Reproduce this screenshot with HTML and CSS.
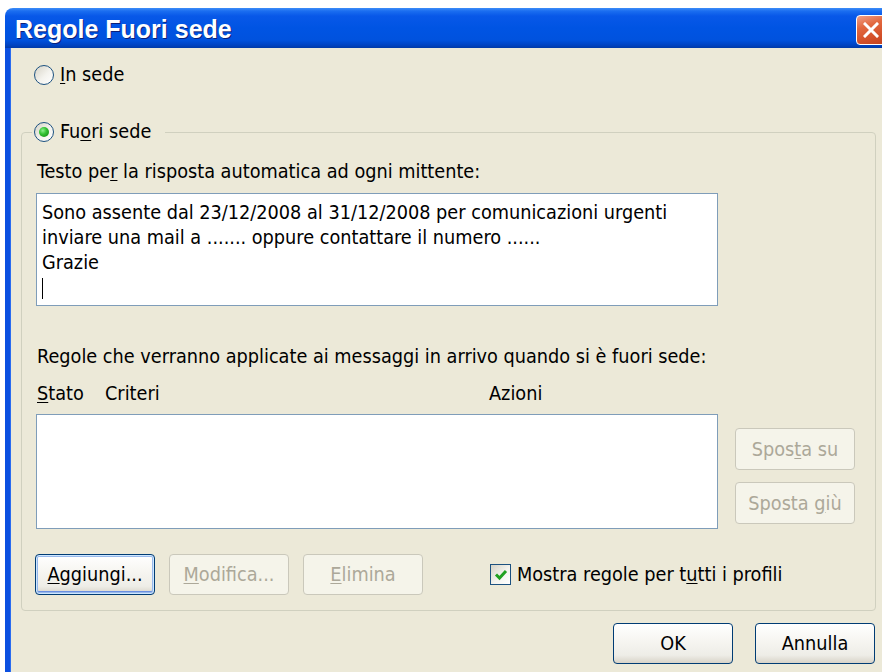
FILE: index.html
```html
<!DOCTYPE html>
<html lang="it">
<head>
<meta charset="utf-8">
<title>Regole Fuori sede</title>
<link rel="stylesheet" href="styles.css">
</head>
<body>
<div class="window">
  <div class="titlebar">
    <span class="title">Regole Fuori sede</span>
    <span class="close">
      <svg width="16" height="16" viewBox="0 0 16 16"><path d="M2 2 L14 14 M14 2 L2 14" stroke="#fff" stroke-width="3" stroke-linecap="square" fill="none"/></svg>
    </span>
  </div>
  <div class="client">
    <div class="option"><span class="radio"></span><span><u>I</u>n sede</span></div>
    <fieldset class="group">
      <legend class="option legend"><span class="radio checked"></span><span>Fu<u>o</u>ri sede</span></legend>
      <div class="group-body">
        <div class="label">Testo pe<u>r</u> la risposta automatica ad ogni mittente:</div>
        <div class="textbox">Sono assente dal 23/12/2008 al 31/12/2008 per comunicazioni urgenti<br>inviare una mail a ....... oppure contattare il numero ......<br>Grazie<br><span class="caret"></span></div>
        <div class="label rules-label">Regole che verranno applicate ai messaggi in arrivo quando si è fuori sede:</div>
        <div class="columns"><span><u>S</u>tato</span><span>Criteri</span><span>Azioni</span></div>
        <div class="list-row">
          <div class="listbox"></div>
          <div class="side-buttons">
            <button class="btn" disabled>Spos<u>t</u>a su</button>
            <button class="btn" disabled>Sposta <u>g</u>iù</button>
          </div>
        </div>
        <div class="actions">
          <button class="btn default"><u>A</u>ggiungi...</button>
          <button class="btn" disabled><u>M</u>odifica...</button>
          <button class="btn" disabled><u>E</u>limina</button>
          <div class="check">
            <span class="checkbox"><svg width="14" height="14" viewBox="0 0 14 14"><path d="M2 6.5 L5.5 10 L12 3" stroke="#21a121" stroke-width="3" fill="none"/></svg></span>
            <span>Mostra regole per t<u>u</u>tti i profili</span>
          </div>
        </div>
      </div>
    </fieldset>
    <div class="footer">
      <button class="btn">OK</button>
      <button class="btn">Annulla</button>
    </div>
  </div>
</div>
</body>
</html>
```

FILE: styles.css
```css
html, body {
  margin: 0;
  padding: 0;
  background: #ffffff;
  overflow: hidden;
  width: 882px;
  height: 672px;
}

body {
  font-family: "DejaVu Sans Condensed", "DejaVu Sans", sans-serif;
  font-stretch: condensed;
  font-size: 19.7px;
  color: #000;
}

u { text-decoration: underline; text-underline-offset: 2px; }

.window {
  margin: 8px 0 0 5px;
  width: 890px;
  border-radius: 8px 8px 0 0;
  overflow: hidden;
}

/* caption */
.titlebar {
  height: 40px;
  display: flex;
  align-items: center;
  justify-content: space-between;
  padding: 0 9px 0 10px;
  background: linear-gradient(180deg, #3c8cf8 0%, #1a6df0 8%, #0858e8 20%, #0054e3 50%, #0052de 80%, #0044c4 92%, #003aa8 100%);
}

.title {
  font-family: "Liberation Sans", Arial, sans-serif;
  font-stretch: normal;
  font-weight: bold;
  font-size: 25px;
  color: #fff;
  text-shadow: 1px 1px 0 #0a1f7a;
  margin-top: 3px;
}

.close {
  width: 28px;
  height: 28px;
  margin-top: 3px;
  border: 1px solid #fff;
  border-radius: 4px;
  background: linear-gradient(160deg, #f0a088 0%, #e2683f 35%, #d4512a 70%, #c4421f 100%);
  display: flex;
  align-items: center;
  justify-content: center;
}

/* dialog body */
.client {
  background: #ece9d8;
  border-left: 5px solid #0b4fe0;
  box-shadow: inset 1px 0 0 #2a6cf0;
  padding: 16px 0 20px 0;
  height: 620px;
}

.option {
  display: flex;
  align-items: center;
  gap: 6px;
  height: 22px;
  line-height: 22px;
  padding-left: 24px;
}

.radio {
  width: 20px;
  height: 20px;
  box-sizing: border-box;
  border: 1px solid #1c5180;
  border-radius: 50%;
  background: linear-gradient(135deg, #d6d3c6 0%, #f4f3ee 55%, #ffffff 100%);
  display: inline-flex;
  align-items: center;
  justify-content: center;
  flex: none;
}

.radio.checked::after {
  content: "";
  width: 10px;
  height: 10px;
  border-radius: 50%;
  background: radial-gradient(circle at 38% 35%, #8ef08e 0%, #34c234 40%, #1f9b1f 75%, #187a18 100%);
}

.group {
  margin: 35px 0 0 11px;
  width: 855px;
  box-sizing: border-box;
  border: 1px solid #d0d0bf;
  border-radius: 4px;
  padding: 0 0 15px 10px;
  min-width: 0;
}

.legend {
  padding: 0 14px 0 2px;
  margin: 0;
}

.group-body {
  padding-left: 4px;
  display: flex;
  flex-direction: column;
}

.label {
  height: 22px;
  line-height: 22px;
  margin-top: 18px;
  padding-left: 1px;
  white-space: nowrap;
}

.textbox {
  margin-top: 10px;
  width: 682px;
  height: 113px;
  box-sizing: border-box;
  background: #fff;
  border: 1px solid #7f9db9;
  padding: 6px 5px 0 5px;
  line-height: 25px;
  white-space: nowrap;
}

.caret {
  display: inline-block;
  width: 0;
  height: 21px;
  border-left: 1px solid #000;
  vertical-align: middle;
}

.rules-label { margin-top: 40px; }

.columns {
  display: grid;
  grid-template-columns: 68px 384px auto;
  height: 22px;
  line-height: 22px;
  margin-top: 15px;
  padding-left: 1px;
}

.list-row {
  display: flex;
  margin-top: 9px;
}

.listbox {
  width: 682px;
  height: 115px;
  box-sizing: border-box;
  background: #fff;
  border: 1px solid #7f9db9;
}

.side-buttons {
  display: flex;
  flex-direction: column;
  gap: 12px;
  margin: 14px 0 0 17px;
}

.side-buttons .btn { height: 42px; }

.btn {
  font: inherit;
  width: 120px;
  height: 41px;
  box-sizing: border-box;
  padding: 0;
  color: #000;
  border: 1px solid #003c74;
  border-radius: 4px;
  background: linear-gradient(180deg, #ffffff 0%, #f7f6f2 40%, #eeede7 80%, #d8d3c8 100%);
  white-space: nowrap;
}

.btn.default {
  box-shadow: inset 0 0 0 1px #cee7ff, inset 0 0 0 2px #98b8ea, inset 0 -2px 0 1px #6a8fe0;
}

.btn:disabled {
  color: #aca899;
  border-color: #cac8bb;
  background: #f5f4ea;
}

.actions {
  display: flex;
  align-items: center;
  gap: 14px;
  margin-top: 25px;
  margin-left: -1px;
}

.check {
  display: flex;
  align-items: center;
  gap: 6px;
  margin-left: 53px;
}

.checkbox {
  width: 21px;
  height: 21px;
  box-sizing: border-box;
  border: 1px solid #1c5180;
  background: linear-gradient(135deg, #d6d3c6 0%, #f4f3ee 55%, #ffffff 100%);
  display: inline-flex;
  align-items: center;
  justify-content: center;
}

.footer {
  display: flex;
  justify-content: flex-end;
  gap: 22px;
  width: 865px;
  margin-top: 12px;
}
```
